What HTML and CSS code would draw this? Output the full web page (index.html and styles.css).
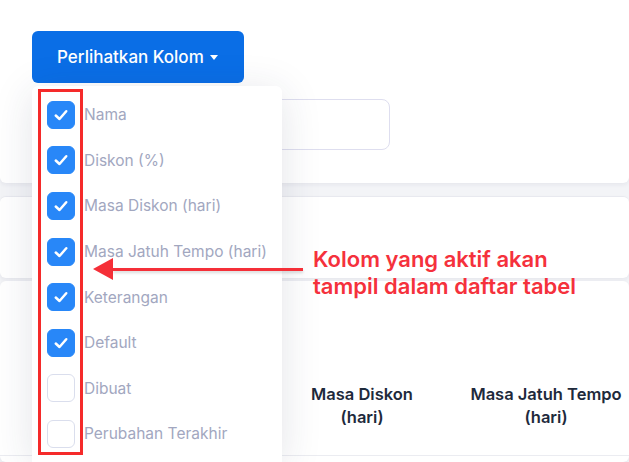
FILE: index.html
```html
<!DOCTYPE html>
<html lang="id">
<head>
<meta charset="utf-8">
<link rel="stylesheet" href="styles.css">
</head>
<body>
<div class="page">
  <section class="card card-top">
    <button class="btn-cols">Perlihatkan Kolom <span class="caret"></span></button>
    <div class="search-row">
      <div class="search-input"></div>
    </div>
  </section>
  <section class="card card-mid"></section>
  <section class="card card-table">
    <div class="thead">
      <div class="th th-empty"></div>
      <div class="th">Masa Diskon<br>(hari)</div>
      <div class="th">Masa Jatuh Tempo<br>(hari)</div>
    </div>
  </section>

  <div class="dropdown">
    <label class="item"><span class="cb on"><svg viewBox="0 0 16 16"><polyline points="3.8,8.4 6.8,11.2 12.2,5"/></svg></span><span class="lbl">Nama</span></label>
    <label class="item"><span class="cb on"><svg viewBox="0 0 16 16"><polyline points="3.8,8.4 6.8,11.2 12.2,5"/></svg></span><span class="lbl">Diskon (%)</span></label>
    <label class="item"><span class="cb on"><svg viewBox="0 0 16 16"><polyline points="3.8,8.4 6.8,11.2 12.2,5"/></svg></span><span class="lbl">Masa Diskon (hari)</span></label>
    <label class="item"><span class="cb on"><svg viewBox="0 0 16 16"><polyline points="3.8,8.4 6.8,11.2 12.2,5"/></svg></span><span class="lbl">Masa Jatuh Tempo (hari)</span></label>
    <label class="item"><span class="cb on"><svg viewBox="0 0 16 16"><polyline points="3.8,8.4 6.8,11.2 12.2,5"/></svg></span><span class="lbl">Keterangan</span></label>
    <label class="item"><span class="cb on"><svg viewBox="0 0 16 16"><polyline points="3.8,8.4 6.8,11.2 12.2,5"/></svg></span><span class="lbl">Default</span></label>
    <label class="item"><span class="cb"></span><span class="lbl">Dibuat</span></label>
    <label class="item"><span class="cb"></span><span class="lbl">Perubahan Terakhir</span></label>
  </div>

  <div class="highlight-box"></div>
  <div class="arrow"><span class="arrow-head"></span><span class="arrow-line"></span></div>
  <div class="note">Kolom yang aktif akan<br>tampil dalam daftar tabel</div>
</div>
</body>
</html>
```

FILE: styles.css
```css
* { box-sizing: border-box; }
html, body { margin: 0; padding: 0; }
body {
  width: 629px;
  height: 462px;
  overflow: hidden;
  background: #f3f4f7;
  font-family: Inter, "Noto Sans", sans-serif;
}
.page {
  position: relative;
  height: 462px;
  overflow: hidden;
  display: flex;
  flex-direction: column;
}
.card {
  background: #fff;
  border-radius: 6px;
  box-shadow: 0 2px 4px rgba(30, 40, 80, 0.06);
}
.card-top {
  flex: none;
  height: 183px;
  border-radius: 0 0 6px 6px;
  padding: 31px 0 0 32px;
}
.btn-cols {
  display: flex;
  align-items: center;
  gap: 6px;
  width: 212px;
  height: 52px;
  padding: 0 0 0 25px;
  border: none;
  border-radius: 6px;
  background: #0a6ee6;
  color: #fff;
  font-family: Inter, "Noto Sans", sans-serif;
  font-size: 17px;
  font-weight: 500;
}
.caret {
  width: 0;
  height: 0;
  border-left: 4.5px solid transparent;
  border-right: 4.5px solid transparent;
  border-top: 5px solid #fff;
}
.search-row {
  margin-top: 16px;
}
.search-input {
  width: 358px;
  height: 51px;
  border: 1px solid #dedeef;
  border-radius: 8px;
}
.card-mid {
  flex: none;
  margin-top: 13px;
  height: 82px;
  border-top: 1px solid #e8e9ef;
}
.card-table {
  margin-top: 3px;
  flex: 1;
  padding-top: 75px;
}
.thead {
  display: grid;
  grid-template-columns: 270px 184px 184px;
  height: 100px;
  border-bottom: 1px solid #ebecf1;
  align-items: center;
}
.th {
  text-align: center;
  font-size: 16.5px;
  font-weight: 600;
  line-height: 23px;
  color: #1e2a3c;
  white-space: nowrap;
}
.dropdown {
  position: absolute;
  left: 32px;
  top: 86px;
  width: 250px;
  height: 376px;
  background: #fff;
  border-radius: 6px 6px 0 0;
  padding: 6px 0 0 15px;
  box-shadow: 0 6px 40px rgba(40, 45, 80, 0.13);
  z-index: 5;
}
.item {
  display: flex;
  align-items: center;
  gap: 9px;
  height: 45.6px;
}
.cb {
  width: 28px;
  height: 28px;
  border-radius: 6px;
  border: 1px solid #dadeed;
  background: #fff;
  display: flex;
  align-items: center;
  justify-content: center;
  flex: none;
}
.cb.on {
  background: #2887f8;
  border-color: #2887f8;
}
.cb svg {
  width: 20px;
  height: 20px;
  fill: none;
  stroke: #fff;
  stroke-width: 2;
  stroke-linecap: round;
  stroke-linejoin: round;
}
.lbl {
  font-size: 15.5px;
  color: #a2a7bf;
  white-space: nowrap;
}
.highlight-box {
  position: absolute;
  left: 38px;
  top: 89px;
  width: 45px;
  height: 366px;
  border: 3px solid #f52a2a;
  z-index: 6;
}
.arrow {
  position: absolute;
  left: 93px;
  top: 258px;
  width: 210px;
  height: 22px;
  display: flex;
  align-items: center;
  z-index: 6;
}
.arrow-head {
  width: 0;
  height: 0;
  border-top: 11px solid transparent;
  border-bottom: 11px solid transparent;
  border-right: 20px solid #f52f38;
}
.arrow-line {
  flex: 1;
  height: 3px;
  background: #f52f38;
  box-shadow: 0 2px 3px rgba(0, 0, 0, 0.15);
}
.note {
  position: absolute;
  left: 313px;
  top: 246px;
  font-size: 22px;
  font-weight: 600;
  line-height: 27px;
  color: #f5313c;
  z-index: 6;
}
```
